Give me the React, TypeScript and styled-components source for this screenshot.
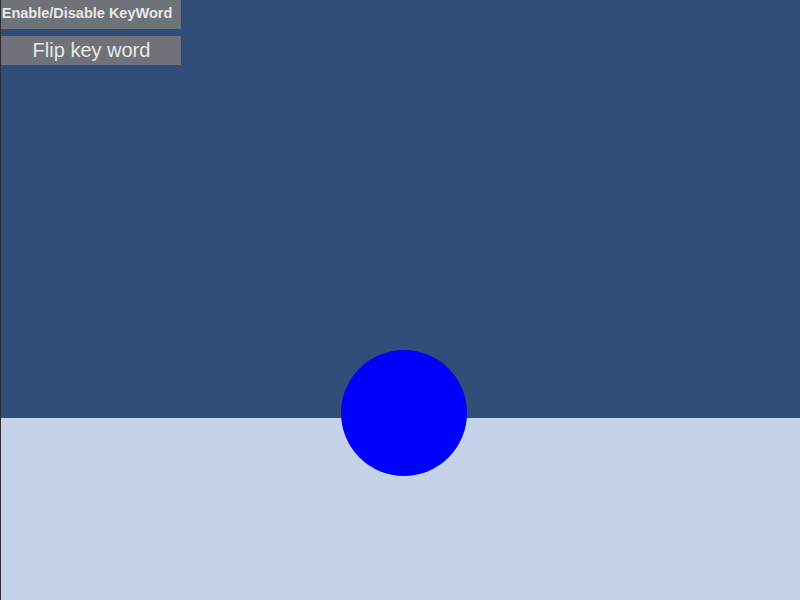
import React from "react";
import styled, { createGlobalStyle } from "styled-components";

const GlobalStyle = createGlobalStyle`
  html, body {
    margin: 0;
    padding: 0;
    width: 100%;
    height: 100%;
    overflow: hidden;
  }
  body {
    font-family: "Liberation Sans", Arial, sans-serif;
  }
`;

const Screen = styled.div`
  position: relative;
  width: 800px;
  height: 600px;
  display: flex;
  flex-direction: column;
  border-left: 1px solid #2c2e31;
  box-sizing: border-box;
  overflow: hidden;
`;

const Sky = styled.div`
  height: 418px;
  background: #304e79;
  display: flex;
  flex-direction: column;
  align-items: flex-start;
  gap: 7px;
`;

const Ground = styled.div`
  flex: 1;
  background: #c4d3e9;
`;

const UiButton = styled.button<{ $bold?: boolean }>`
  width: 180px;
  height: 29px;
  border: none;
  margin: 0;
  padding: ${(p) => (p.$bold ? "0 8px 3px 0" : "0 0 1px 1px")};
  background: #6f7279;
  color: #e8e8e8;
  font-family: "Liberation Sans", Arial, sans-serif;
  font-size: ${(p) => (p.$bold ? "14.5px" : "20px")};
  font-weight: ${(p) => (p.$bold ? 700 : 400)};
  white-space: nowrap;
  display: flex;
  align-items: center;
  justify-content: center;
  cursor: pointer;
`;

const Ball = styled.div`
  position: absolute;
  left: 340px;
  top: 350px;
  width: 126px;
  height: 126px;
  border-radius: 50%;
  background: #0000ff;
`;

export default function App() {
  return (
    <>
      <GlobalStyle />
      <Screen>
        <Sky>
          <UiButton $bold>Enable/Disable KeyWord</UiButton>
          <UiButton>Flip key word</UiButton>
        </Sky>
        <Ground />
        <Ball />
      </Screen>
    </>
  );
}
